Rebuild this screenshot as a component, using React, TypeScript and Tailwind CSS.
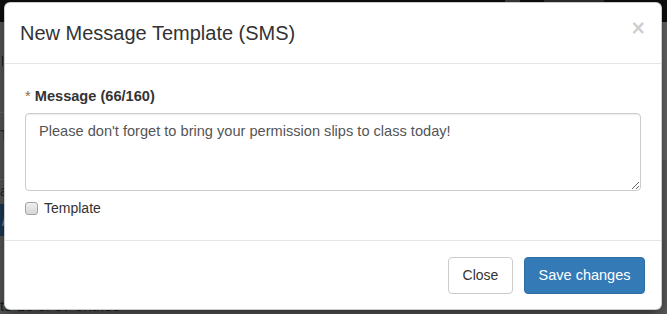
import React from "react";

export default function App() {
  return (
    <div className="relative w-[667px] h-[314px] overflow-hidden bg-[#595959] font-['Liberation_Sans',Arial,sans-serif]">
      {/* dimmed page behind the modal */}
      <div className="flex flex-col h-full">
        <div className="h-[22px] shrink-0 bg-[#0e0e0e] flex items-start pl-[505px] gap-[24px]">
          <div className="w-[15px] h-[3px] bg-[#3c3c3c]" />
          <div className="w-[60px] h-[2px] bg-[#2e2e2e]" />
        </div>
        <div className="flex-1 flex">
          <div className="w-[12px] flex flex-col text-[#262626] text-[14px] leading-none">
            <div className="h-[91px] border-b border-[#6a6a6a] flex items-start pt-[34px] pl-[2px]">
              <div className="w-[1px] h-[10px] bg-[#222]" />
            </div>
            <div className="h-[67px] border-b border-[#6a6a6a] pt-[15px]">T</div>
            <div className="h-[24px] pt-[4px]">a</div>
            <div className="h-[32px] bg-[#1d3a56] text-white/50 pt-[10px] pl-[2px]">/</div>
            <div className="flex-1" />
          </div>
          <div className="flex-1 flex flex-col justify-end">
            <div className="text-[15px] text-[#1c1c1c] leading-none pb-[1px] -ml-[12px]">to 10 of 67 entries</div>
          </div>
          <div className="w-[12px] flex flex-col">
            <div className="h-[138px] bg-[#686868]" />
            <div className="flex-1 bg-[#5d5d5d]" />
          </div>
        </div>
      </div>

      {/* modal */}
      <div className="absolute left-[4px] top-[2px] w-[658px] h-[308px] bg-white rounded-[6px] border border-black/20 shadow-[0_5px_15px_rgba(0,0,0,0.5)] flex flex-col">
        <div className="h-[61px] shrink-0 border-b border-[#e5e5e5] flex items-center justify-between pl-[15px] pr-[16px]">
          <h4 className="text-[20px] text-[#333] leading-none">New Message Template (SMS)</h4>
          <span className="text-[23px] font-bold text-black/20 leading-none -mt-[9px]">×</span>
        </div>

        <div className="flex-1 flex flex-col pt-[22px] pl-[20px] pr-[20px]">
          <label className="h-[20px] leading-[20px] mb-[7px] text-[14.6px] text-[#333]">
            <span className="text-[#8a6d3b]">*</span>{" "}
            <span className="font-bold">Message (66/160)</span>
          </label>
          <textarea
            readOnly
            defaultValue="Please don't forget to bring your permission slips to class today!"
            className="w-full h-[78px] rounded-[4px] border border-[#ccc] px-[13px] py-[7px] text-[14.6px] leading-[21px] text-[#555] font-['Liberation_Sans',Arial,sans-serif] outline-none shadow-[inset_0_1px_1px_rgba(0,0,0,0.075)]"
          />
          <div className="mt-[8px] h-[18px] flex items-center gap-[6px]">
            <span className="w-[13px] h-[13px] rounded-[3px] border border-[#a3a3a3] bg-gradient-to-b from-[#efefef] to-[#d6d6d6]" />
            <span className="text-[14px] text-[#333]">Template</span>
          </div>
        </div>

        <div className="h-[69px] shrink-0 border-t border-[#e5e5e5] flex items-start justify-end gap-[11px] pt-[16px] pr-[16px]">
          <button className="w-[65px] h-[37px] rounded-[4px] border border-[#ccc] bg-white text-[14px] text-[#333]">
            Close
          </button>
          <button className="w-[121px] h-[37px] rounded-[4px] border border-[#2e6da4] bg-[#337ab7] text-[14.5px] text-white">
            Save changes
          </button>
        </div>
      </div>
    </div>
  );
}
